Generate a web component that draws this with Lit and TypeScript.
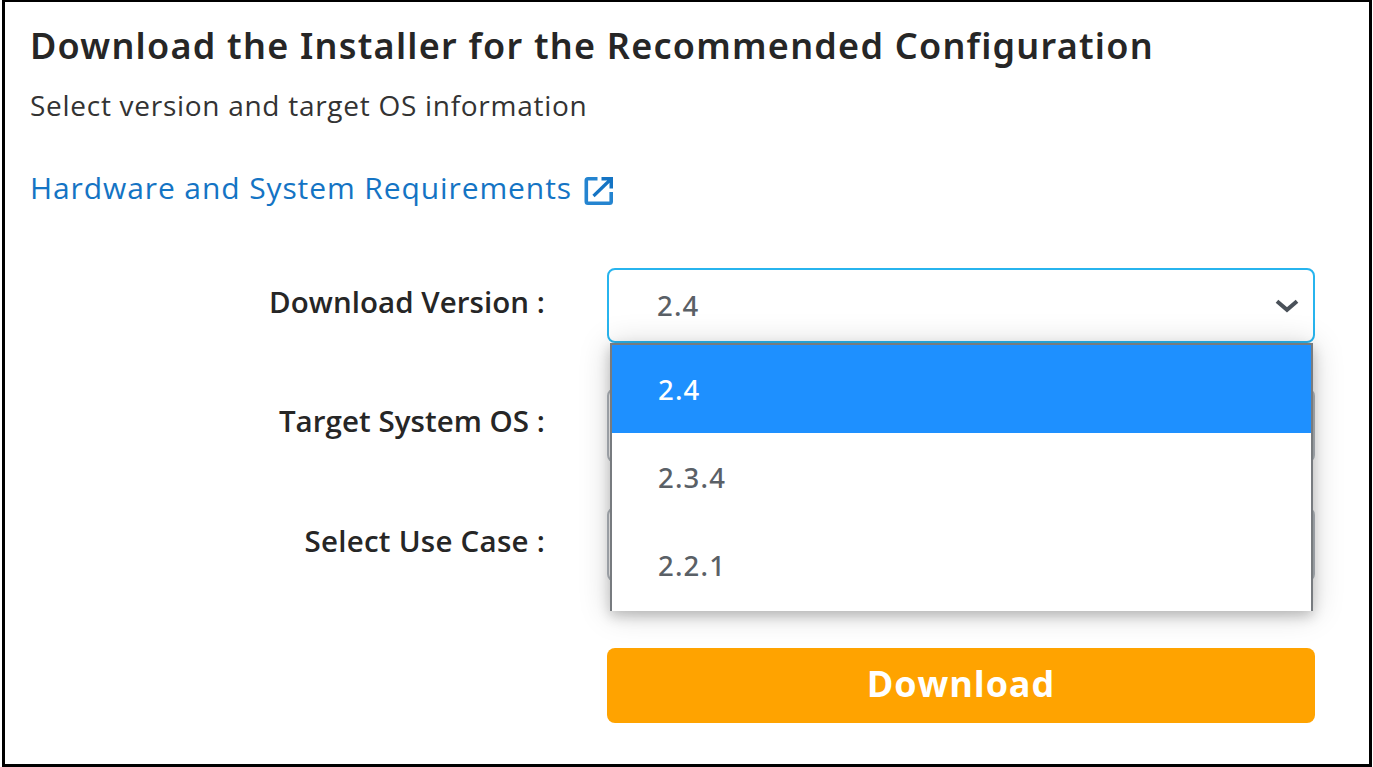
import { LitElement, html, css } from "lit";
import { customElement, state } from "lit/decorators.js";
import { classMap } from "lit/directives/class-map.js";

@customElement("version-select")
class VersionSelect extends LitElement {
  static properties = {
    options: { attribute: false },
    open: { type: Boolean },
  };
  declare options: string[];
  declare open: boolean;

  @state() private selected = 0;

  static styles = css`
    :host { display: block; position: relative; height: 75px; }
    .box {
      box-sizing: border-box; height: 75px; width: 100%;
      display: flex; align-items: center; justify-content: space-between;
      border: 2px solid #b4bac0; border-radius: 8px; background: #fff;
      padding: 0 14px 0 48px;
    }
    .box.open { border-color: #27b4ee; }
    .value, .option {
      font: 500 27.5px/40px "Noto Sans", sans-serif; letter-spacing: 1.2px; color: #5a6066;
    }
    .value { padding-top: 1px; }
    .chevron { display: block; width: 24px; height: 16px; }
    .menu {
      position: absolute; z-index: 2; top: 75px; left: 2.5px; right: 2px; height: 268px;
      box-sizing: border-box; background: #fff;
      border: 2px solid #777b7f; border-bottom: 0;
      box-shadow: 0 5px 12px rgba(0, 0, 0, .2), 0 2px 30px rgba(0, 0, 0, .18);
    }
    .option {
      box-sizing: border-box; height: 88px; display: flex; align-items: center;
      padding: 2px 0 0 46.5px;
    }
    .option.active { background: #1e90ff; color: #fff; }
  `;

  render() {
    const list = this.options ?? [];
    return html`
      <div class=${classMap({ box: true, open: this.open })}>
        <span class="value">${list[this.selected] ?? ""}</span>
        <svg class="chevron" viewBox="0 0 24 16" fill="none" stroke="#4a5159" stroke-width="4">
          <path d="M2 3.2 12 11.8 22 3.2" />
        </svg>
      </div>
      ${this.open
        ? html`<div class="menu">
            ${list.map((o, i) => html`<div
              class=${classMap({ option: true, active: i === this.selected })}
              @click=${() => (this.selected = i)}>${o}</div>`)}
          </div>`
        : ""}
    `;
  }
}

@customElement("app-root")
class AppRoot extends LitElement {
  static styles = css`
    :host {
      display: block; box-sizing: border-box; height: 767px; padding: 0 1px 0 2px;
      background: #fff; color: #262626; overflow: hidden;
      font-family: "Open Sans", "Noto Sans", sans-serif;
    }
    .panel {
      box-sizing: border-box; height: 767px;
      border: 3px solid #000; border-top-width: 2px;
      padding: 20px 54px 0 25px;
    }
    h1 {
      margin: 0; font: 600 36px/48px "Noto Sans", sans-serif;
      letter-spacing: 1.23px; white-space: nowrap;
    }
    .sub { margin: 15px 0 0; font-size: 28px; line-height: 40px; letter-spacing: .72px; color: #333; }
    .link {
      display: flex; align-items: center; margin-top: 43px; width: max-content;
      font-size: 30px; line-height: 40px; letter-spacing: .9px; color: #1474c4; text-decoration: none;
    }
    .ext { width: 30px; height: 30px; margin: 6px 0 0 12px; display: block; }
    .form { margin-top: 60px; display: grid; grid-template-columns: 515px 1fr; column-gap: 62px; row-gap: 44.5px; }
    .label {
      display: flex; align-items: center; justify-content: flex-end; padding-bottom: 9px;
      font-size: 29.5px; font-weight: 600; white-space: nowrap; letter-spacing: .05px;
    }
    .label.wide { letter-spacing: .25px; }
    .download {
      grid-column: 2; margin: 21px 0 0; height: 75px; border: 0; border-radius: 8px; padding: 0 0 2px;
      background: #ffa300; color: #fff; font: 700 36px/48px "Open Sans", sans-serif; letter-spacing: .9px;
    }
  `;

  render() {
    return html`
      <main class="panel">
        <h1>Download the Installer for the Recommended Configuration</h1>
        <p class="sub">Select version and target OS information</p>
        <a class="link" href="#">Hardware and System Requirements
          <svg class="ext" viewBox="0 0 30 30" fill="none" stroke="#2484d0" stroke-width="3.6">
            <path d="M13.5 2.8H4Q2.3 2.8 2.3 4.5V25.5Q2.3 27.2 4 27.2H25.5Q27.2 27.2 27.2 25.5V16" />
            <path d="M9.5 20 25 5" stroke="#1474c4" stroke-width="3.2" />
            <path d="M17.5 1H29V12.5H25.5V7L23 4.5H17.5Z" fill="#1474c4" stroke="none" />
          </svg>
        </a>
        <div class="form">
          <div class="label">Download Version :</div>
          <version-select .options=${["2.4", "2.3.4", "2.2.1"]} open></version-select>
          <div class="label">Target System OS :</div>
          <version-select></version-select>
          <div class="label wide">Select Use Case :</div>
          <version-select></version-select>
          <button class="download">Download</button>
        </div>
      </main>
    `;
  }
}
